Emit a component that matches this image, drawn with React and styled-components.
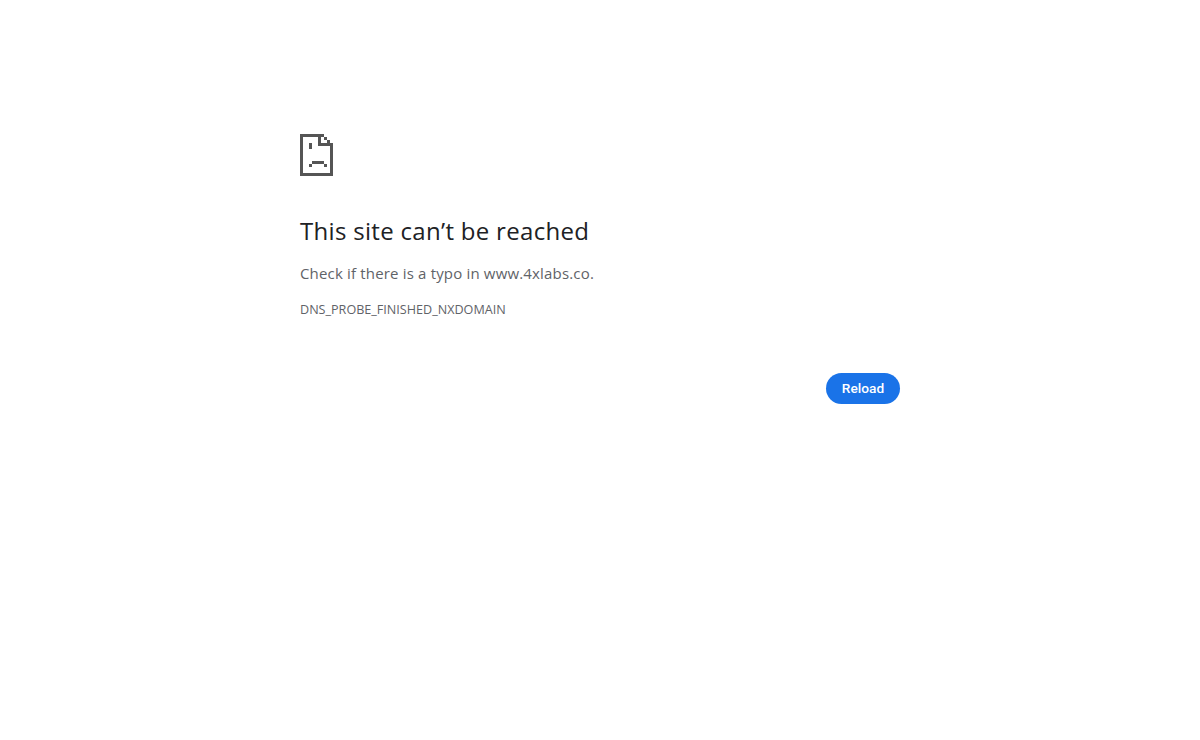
import styled, { createGlobalStyle } from "styled-components";

const GlobalStyle = createGlobalStyle`
  html, body {
    margin: 0;
    background: #fff;
  }
`;

const Page = styled.div`
  width: 600px;
  margin: 0 auto;
  padding-top: 134px;
  font-family: "Open Sans", "Noto Sans", sans-serif;
`;

const Icon = styled.svg`
  display: block;
  width: 33px;
  height: 42px;
  shape-rendering: crispEdges;
`;

const Heading = styled.h1`
  margin: 39px 0 0;
  font-size: 24px;
  line-height: 32px;
  font-weight: 400;
  letter-spacing: 0.31px;
  color: #202124;
`;

const Message = styled.p`
  margin: 16px 0 0;
  font-size: 15px;
  line-height: 20px;
  letter-spacing: 0.17px;
  color: #5f6368;
`;

const ErrorCode = styled.div`
  margin-top: 19px;
  font-size: 12.6px;
  line-height: 16px;
  color: #5f6368;
`;

const Actions = styled.div`
  display: flex;
  justify-content: flex-end;
  margin-top: 55px;
`;

const ReloadButton = styled.button`
  width: 74px;
  height: 31px;
  padding: 0 0 1px;
  border: none;
  border-radius: 16px;
  background: #1a73e8;
  color: #fff;
  font-family: "Roboto", "Liberation Sans", sans-serif;
  font-size: 13.7px;
  font-weight: 500;
`;

export default function App() {
  return (
    <>
      <GlobalStyle />
      <Page>
        <Icon viewBox="0 0 33 42" fill="#555555">
          {/* page outline, drawn on a 3px pixel grid */}
          <path d="M0 0h24v3H3v36h27V12h3v30H0z" />
          {/* folded corner */}
          <path d="M18 3h3v9h-3zM21 9h9v3h-9zM24 3h3v3h-3zM27 6h3v3h-3zM30 9h3v3h-3z" />
          {/* eye and mouth */}
          <path d="M9 9h3v6H9z" />
          <path d="M12 27h12v3H12zM9 30h3v3H9zM24 30h3v3h-3z" />
        </Icon>
        <Heading>This site can’t be reached</Heading>
        <Message>Check if there is a typo in www.4xlabs.co.</Message>
        <ErrorCode>DNS_PROBE_FINISHED_NXDOMAIN</ErrorCode>
        <Actions>
          <ReloadButton>Reload</ReloadButton>
        </Actions>
      </Page>
    </>
  );
}
